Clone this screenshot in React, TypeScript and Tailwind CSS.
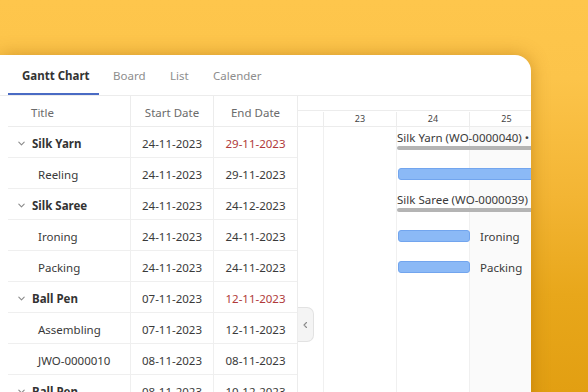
import React from "react";

const font = { fontFamily: '"Noto Sans", "Open Sans", sans-serif' };

type Row = { title: string; start: string; end: string; group?: boolean; red?: boolean };

const rows: Row[] = [
  { title: "Silk Yarn", start: "24-11-2023", end: "29-11-2023", group: true, red: true },
  { title: "Reeling", start: "24-11-2023", end: "29-11-2023" },
  { title: "Silk Saree", start: "24-11-2023", end: "24-12-2023", group: true },
  { title: "Ironing", start: "24-11-2023", end: "24-11-2023" },
  { title: "Packing", start: "24-11-2023", end: "24-11-2023" },
  { title: "Ball Pen", start: "07-11-2023", end: "12-11-2023", group: true, red: true },
  { title: "Assembling", start: "07-11-2023", end: "12-11-2023" },
  { title: "JWO-0000010", start: "08-11-2023", end: "08-11-2023" },
  { title: "Ball Pen", start: "08-11-2023", end: "10-12-2023", group: true },
];

function Chevron() {
  return (
    <svg width="9" height="9" viewBox="0 0 10 10" className="shrink-0">
      <path d="M2 3.5 L5 6.5 L8 3.5" fill="none" stroke="#8a8a8a" strokeWidth="1.2" strokeLinecap="round" strokeLinejoin="round" />
    </svg>
  );
}

export default function App() {
  return (
    <div
      className="w-[588px] h-[392px] overflow-hidden bg-[linear-gradient(180deg,#fec64c_0%,#fcc44a_20%,#f3b534_50%,#e8a71b_75%,#e29f12_100%)] pt-[55px]"
      style={font}
    >
      <div className="w-[531px] h-[400px] bg-white rounded-tr-[16px] shadow-[0_0_18px_rgba(160,95,0,0.45)] flex flex-col">
        {/* Tabs */}
        <div className="h-[41px] shrink-0 flex items-stretch pl-[8px] border-b border-[#ececec] text-[11.5px]">
          <div className="w-[91px] shrink-0 pl-[14px] pt-[3px] flex items-center font-bold text-[#333] border-b-2 border-[#4a6bc4] whitespace-nowrap">Gantt Chart</div>
          <div className="w-[57px] shrink-0 pl-[14px] pt-[1px] flex items-center text-[#8d8d8d]">Board</div>
          <div className="w-[43px] shrink-0 pl-[14px] pt-[1px] flex items-center text-[#8d8d8d]">List</div>
          <div className="pl-[14px] pt-[1px] flex items-center text-[#8d8d8d]">Calender</div>
        </div>
        {/* Body */}
        <div className="flex flex-1">
          {/* Left table */}
          <div className="ml-[8px] w-[290px] shrink-0 border-r border-[#ececec] text-[11.5px]">
            <div className="h-[31px] flex items-center border-b border-[#ececec] text-[#6b6b6b]">
              <div className="w-[123px] pl-[23px] pt-[3px] border-r border-[#ececec] h-full flex items-center">Title</div>
              <div className="w-[83px] pt-[3px] border-r border-[#ececec] h-full flex items-center justify-center">Start Date</div>
              <div className="w-[83px] pt-[3px] h-full flex items-center justify-center">End Date</div>
            </div>
            {rows.map((r, i) => (
              <div key={i} className="h-[31px] flex items-center border-b border-[#efefef] text-[#3a3a3a]">
                <div className="w-[123px] h-full pt-[3px] border-r border-[#efefef] flex items-center">
                  {r.group ? (
                    <div className="flex items-center pl-[9px] gap-[6px]">
                      <Chevron />
                      <span className="font-bold text-[#333]">{r.title}</span>
                    </div>
                  ) : (
                    <span className="pl-[30px]">{r.title}</span>
                  )}
                </div>
                <div className="w-[83px] h-full pt-[3px] border-r border-[#efefef] flex items-center justify-center">{r.start}</div>
                <div className={`w-[83px] h-full pt-[3px] flex items-center justify-center ${r.red ? "text-[#b03a3a]" : ""}`}>{r.end}</div>
              </div>
            ))}
          </div>
          {/* Chart */}
          <div className="flex-1 relative overflow-hidden">
            {/* header */}
            <div className="h-[31px] border-b border-[#ececec] flex flex-col">
              <div className="h-[15px] shrink-0 border-b border-[#ececec]"></div>
              <div className="flex-1 flex text-[9px] text-[#444] pt-[1px]">
                <div className="w-[26px] shrink-0 border-r border-[#ececec]"></div>
                <div className="w-[73px] shrink-0 border-r border-[#ececec] flex items-center justify-center">23</div>
                <div className="w-[73px] shrink-0 border-r border-[#ececec] flex items-center justify-center">24</div>
                <div className="w-[73px] shrink-0 flex items-center justify-center">25</div>
              </div>
            </div>
            {/* grid */}
            <div className="flex h-[300px]">
              <div className="w-[26px] shrink-0 border-r border-[#f0f0f0]"></div>
              <div className="w-[73px] shrink-0 border-r border-[#f0f0f0]"></div>
              <div className="w-[73px] shrink-0 border-r border-[#f0f0f0]"></div>
              <div className="flex-1 bg-[#fafafa]"></div>
            </div>
            {/* bars */}
            <div className="absolute left-0 right-0 top-[31px] text-[11.5px] text-[#3a3a3a]">
              <div className="h-[31px] pl-[99px] pt-[3px] flex flex-col">
                <div className="whitespace-nowrap leading-[16px]">Silk Yarn (WO-0000040) •</div>
                <div className="h-[4px] bg-[#b4b4b4] rounded-l-full w-[200px]"></div>
              </div>
              <div className="h-[31px] pl-[100px] pt-[10px]">
                <div className="h-[12px] w-[200px] bg-[#8bb9f6] border border-[#72a5ee] rounded-[3px]"></div>
              </div>
              <div className="h-[31px] pl-[99px] pt-[3px] flex flex-col">
                <div className="whitespace-nowrap leading-[16px]">Silk Saree (WO-0000039) •</div>
                <div className="h-[4px] bg-[#b4b4b4] rounded-l-full w-[200px]"></div>
              </div>
              <div className="h-[31px] pl-[100px] flex items-center gap-[10px]">
                <div className="h-[12px] w-[72px] bg-[#8bb9f6] border border-[#72a5ee] rounded-[3px]"></div>
                <span className="pt-[2px]">Ironing</span>
              </div>
              <div className="h-[31px] pl-[100px] flex items-center gap-[10px]">
                <div className="h-[12px] w-[72px] bg-[#8bb9f6] border border-[#72a5ee] rounded-[3px]"></div>
                <span className="pt-[2px]">Packing</span>
              </div>
            </div>
            {/* splitter handle */}
            <div className="absolute left-0 top-[211px] w-[16px] h-[35px] bg-[#f4f4f4] border border-l-0 border-[#e2e2e2] rounded-r-[7px] flex items-center justify-center">
              <svg width="7" height="8" viewBox="0 0 7 8">
                <path d="M4.5 1.5 L2 4 L4.5 6.5" fill="none" stroke="#8a8a8a" strokeWidth="1.1" strokeLinecap="round" strokeLinejoin="round" />
              </svg>
            </div>
          </div>
        </div>
      </div>
    </div>
  );
}
